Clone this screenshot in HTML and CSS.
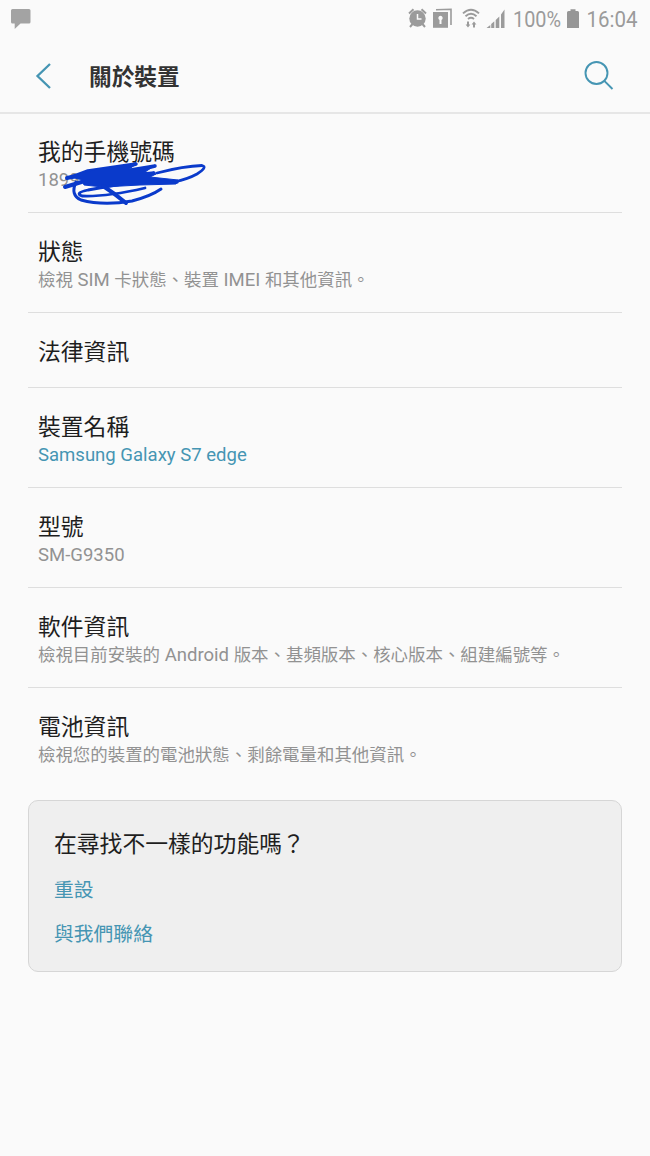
FILE: index.html
```html
<!DOCTYPE html>
<html lang="zh-Hant">
<head>
<meta charset="utf-8">
<title>關於裝置</title>
<link rel="stylesheet" href="styles.css">
</head>
<body>
<div class="screen">
  <div class="status">
    <svg class="chat" width="22" height="22" viewBox="0 0 22 22"><path d="M2.500 0H19Q20.500 0 20.500 1.500V13Q20.500 14.500 19 14.500H10.500L4.700 20V14.500H2.500Q1 14.500 1 13V1.500Q1 0 2.500 0Z" fill="#a3a3a3"/></svg>
    <svg class="tray" width="250" height="38" viewBox="400 0 250 38" fill="#9b9b9b">
      <g>
        <circle cx="417.500" cy="18.500" r="8.200"/>
        <path d="M409 13.500L413.500 9.300M426 13.500L421.500 9.300M412.500 24L410 27M422.500 24L425 27" stroke="#9b9b9b" stroke-width="2" fill="none"/>
        <path d="M417.500 14V19H421.500" stroke="#fafafa" stroke-width="1.500" fill="none"/>
      </g>
      <g>
        <path d="M436 9.800L451 9.300V25" fill="none" stroke="#9b9b9b" stroke-width="1.600"/>
        <path d="M433 12H448V27.800H433Z"/>
        <path d="M440.500 15.700A2.300 2.300 0 0 1 441.500 20V24H439.500V20A2.300 2.300 0 0 1 440.500 15.700Z" fill="#fafafa"/>
      </g>
      <g>
        <path d="M463 13.400Q471 6 479 13.400M465.500 16.200Q471 11.200 476.500 16.200M468 18.900Q471 16.500 474 18.900" fill="none" stroke="#9b9b9b" stroke-width="1.900"/>
        <path d="M467 21.500H469V24.500H470.400L468 27.500L465.600 24.500H467ZM473 27.500H475V24.500H476.400L474 21.500L471.600 24.500H473Z"/>
      </g>
      <path d="M486.500 28L490.300 25V28ZM491.200 24L494.300 21.300V28H491.200ZM495.700 20L499.300 16.500V28H495.700ZM501 14.500L504.500 9.500V28H501Z"/>
      <text class="tray-text" x="513" y="27.300" textLength="48" lengthAdjust="spacingAndGlyphs">100%</text>
      <path d="M570.500 9.200H575.500V11H577.500Q579 11 579 12.500V28H567V12.500Q567 11 568.500 11H570.500Z" fill="#969696"/>
      <text class="tray-text" x="586.500" y="27.300" textLength="51" lengthAdjust="spacingAndGlyphs">16:04</text>
    </svg>
  </div>
  <header class="bar">
    <svg class="back" width="18" height="28" viewBox="0 0 18 28"><path d="M15 2L2.500 14L15 26" fill="none" stroke="#4595b3" stroke-width="2.300"/></svg>
    <h1>關於裝置</h1>
    <svg class="search" width="32" height="32" viewBox="0 0 32 32" fill="none" stroke="#4595b3" stroke-width="1.900"><circle cx="13.500" cy="13" r="11"/><path d="M21.300 20.800L29.500 29"/></svg>
  </header>
  <main class="list">
    <section class="row"><h2>我的手機號碼</h2><p><span class="latin">1899</span></p>
      <svg class="scribble" width="150" height="50" viewBox="60 160 150 50" fill="none" stroke="#0a3acb" stroke-linecap="round" stroke-linejoin="round">
        <path d="M72 177L88 171L136 164L94 176L155 166L106 178L154 173L107 181L177 182" stroke-width="3.500"/>
        <path d="M67 178L76 176M65 187L75 184L88 180" stroke-width="4"/>
        <path d="M71 177Q84 170 136 164L128 170L154 166L145 172L156 174L150 177L178 180L176 184L140 185L103 187L84 185L82 180Z" fill="#0a3acb" stroke-width="1"/>
        <path d="M157 173Q184 166 202 165.500Q208 167 197 174Q188 179 174 182M145 188Q106 197 82 196Q74 193 88 190L122 184" stroke-width="2.800"/>
        <path d="M76 182Q70 195 81 200Q103 206 132 201Q151 196 161 189" stroke-width="3"/>
        <path d="M103 186Q114 193 126 203" stroke-width="4"/>
      </svg>
    </section>
    <section class="row"><h2>狀態</h2><p>檢視<span class="latin"> SIM </span>卡狀態、裝置<span class="latin"> IMEI </span>和其他資訊。</p></section>
    <section class="row single"><h2>法律資訊</h2></section>
    <section class="row"><h2>裝置名稱</h2><p class="accent"><span class="latin">Samsung Galaxy S7 edge</span></p></section>
    <section class="row"><h2>型號</h2><p><span class="latin">SM-G9350</span></p></section>
    <section class="row"><h2>軟件資訊</h2><p>檢視目前安裝的<span class="latin"> Android </span>版本、基頻版本、核心版本、組建編號等。</p></section>
    <section class="row last"><h2>電池資訊</h2><p>檢視您的裝置的電池狀態、剩餘電量和其他資訊。</p></section>
    <aside class="card">
      <h2>在尋找不一樣的功能嗎？</h2>
      <a>重設</a>
      <a>與我們聯絡</a>
    </aside>
  </main>
</div>
</body>
</html>
```
FILE: styles.css
```css
* { box-sizing: border-box; }
body { margin: 0; background: #fafafa; font-family: Roboto, "Noto Sans CJK TC", sans-serif; }
h1, h2, p { margin: 0; font-weight: 400; white-space: nowrap; }
svg { display: block; flex: none; }
.screen { width: 650px; height: 1156px; overflow: hidden; }
.status { height: 38px; display: flex; justify-content: space-between; padding-left: 10px; }
.chat { margin-top: 9px; }
.tray-text { font-size: 22.5px; }
.bar { height: 76px; border-bottom: 2px solid #e6e6e6; display: flex; align-items: center; padding: 2px 35px 0 35px; }
.bar h1 { font-size: 22.7px; line-height: 34px; font-weight: 600; color: #333; margin-left: 36px; flex: 1; padding-top: 3px; }
.list { padding: 0 28px; }
.row { position: relative; height: 100px; padding: 23px 10px 0; border-bottom: 1px solid #dedede; }
.row:first-child { height: 99px; padding-top: 22px; }
.row.single { height: 75px; }
.row.last { border-bottom: 0; }
.row h2, .card h2 { font-size: 22.8px; line-height: 34px; color: #1e1e1e; }
.row p { font-size: 17.45px; line-height: 24px; margin-top: -2px; color: #929292; }
.row .latin { font-size: 18.55px; line-height: 1; white-space: pre; }
.row .accent { color: #4595b3; }
.scribble { position: absolute; left: 32px; top: 46px; }
.card { margin-top: 12px; height: 172px; padding: 27px 25px 0; border: 1px solid #d6d6d6; border-radius: 10px; background: #efefef; display: flex; flex-direction: column; }
.card a { font-size: 19.8px; line-height: 30px; color: #4595b3; margin-top: 14px; }
```
